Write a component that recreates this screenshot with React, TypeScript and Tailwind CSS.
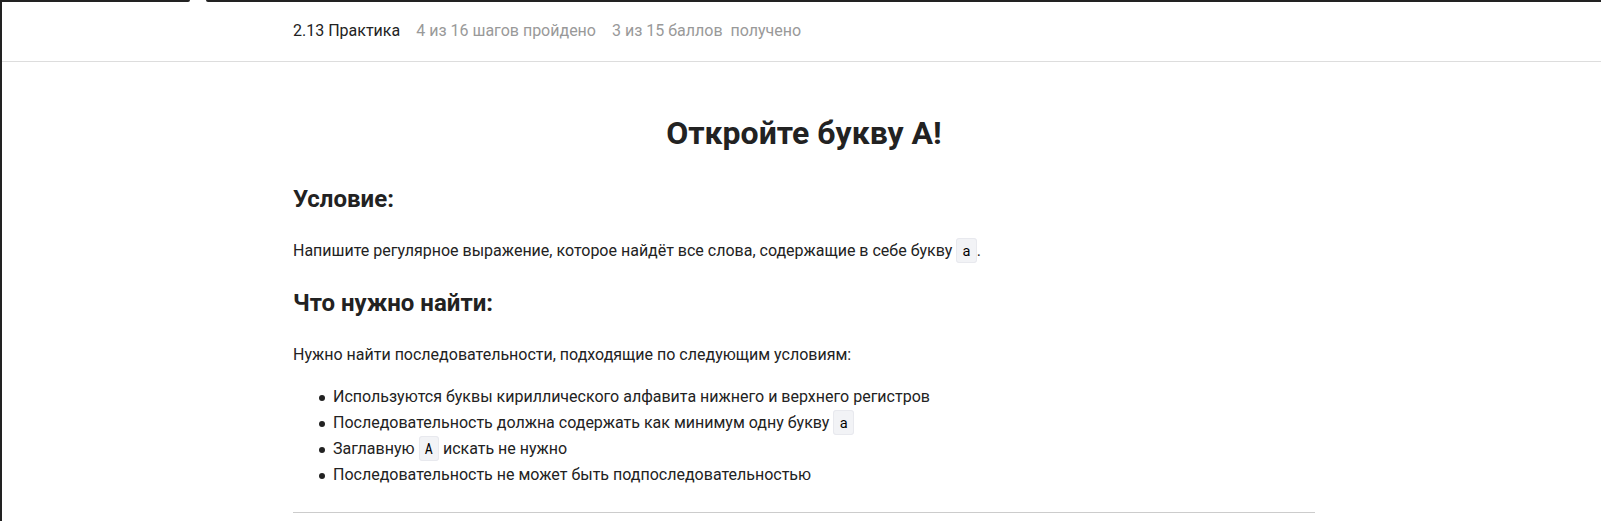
import type { ReactNode } from 'react';

function Code({ children }: { children: ReactNode }) {
  return (
    <code className="rounded-[3px] border border-[#e8e9ee] bg-[#f2f3f6] px-[5px] py-[2px] font-['Roboto_Mono','DejaVu_Sans_Mono',monospace] text-sm leading-none text-black">
      {children}
    </code>
  );
}

function Item({ children }: { children: ReactNode }) {
  return (
    <li className="before:mr-2 before:-ml-[14px] before:inline-block before:size-[6px] before:rounded-full before:bg-[#222] before:align-middle">
      {children}
    </li>
  );
}

export default function App() {
  return (
    <div className="flex h-screen flex-col overflow-hidden border-l-2 border-[#222] bg-white font-['Roboto',sans-serif] text-base text-[#222]">
      <div className="flex h-[2px] shrink-0">
        <div className="w-[188px] rounded-br-sm bg-[#222]" />
        <div className="w-4" />
        <div className="grow rounded-bl-sm bg-[#222]" />
      </div>
      <header className="shrink-0 border-b border-[#ddd]">
        <div className="ml-[291px] flex h-[59px] items-center gap-4 pb-[2px] whitespace-pre">
          <span>2.13 Практика</span>
          <span className="text-[#999]">4 из 16 шагов пройдено</span>
          <span className="text-[#999]">3 из 15 баллов  получено</span>
        </div>
      </header>
      <main className="mr-[286px] ml-[291px] pt-[49px] leading-[26px]">
        <h1 className="text-center text-[32px] leading-[44px] font-bold">Откройте букву А!</h1>
        <h2 className="mt-7 text-2xl leading-8 font-bold">Условие:</h2>
        <p className="mt-[23px]">
          Напишите регулярное выражение, которое найдёт все слова, содержащие в себе букву <Code>а</Code>.
        </p>
        <h2 className="mt-[23px] text-2xl leading-8 font-bold">Что нужно найти:</h2>
        <p className="mt-[23px]">Нужно найти последовательности, подходящие по следующим условиям:</p>
        <ul className="mt-4 pl-10">
          <Item>Используются буквы кириллического алфавита нижнего и верхнего регистров</Item>
          <Item>Последовательность должна содержать как минимум одну букву <Code>а</Code></Item>
          <Item>Заглавную <Code>А</Code> искать не нужно</Item>
          <Item>Последовательность не может быть подпоследовательностью</Item>
        </ul>
        <hr className="mt-6 border-[#ccc]" />
      </main>
    </div>
  );
}
